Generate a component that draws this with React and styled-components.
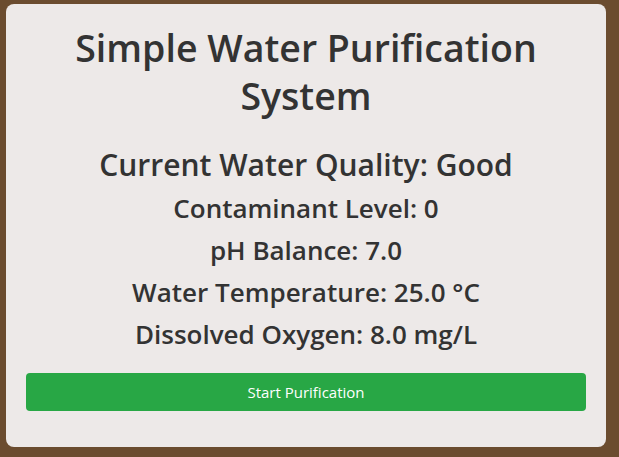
import React from "react";
import styled, { createGlobalStyle } from "styled-components";

const Global = createGlobalStyle`
  html, body { margin: 0; padding: 0; }
  body {
    background: #6b4c2f;
    font-family: "Open Sans", "Noto Sans", sans-serif;
    color: #333;
  }
`;

const Page = styled.div`
  padding: 4px 13px 11px 6px;
`;

const Card = styled.div`
  background: #ede9e8;
  border-radius: 8px;
  padding: 20px 20px 36px;
  width: 600px;
  box-sizing: border-box;
  text-align: center;
`;

const Title = styled.h1`
  font-size: 37.5px;
  font-weight: 600;
  line-height: 48px;
  margin: 0 30px 25px;
`;

const Quality = styled.h2`
  font-size: 30px;
  font-weight: 600;
  line-height: 40px;
  margin: 0 0 2px;
`;

const Stat = styled.p`
  font-size: 26px;
  font-weight: 600;
  line-height: 42px;
  margin: 0;
`;

const Button = styled.button`
  display: block;
  width: 100%;
  height: 38px;
  margin-top: 18px;
  background: #28a745;
  color: #fff;
  border: none;
  border-radius: 4px;
  font-family: inherit;
  font-size: 15px;
  cursor: pointer;
`;

export default function App() {
  return (
    <Page>
      <Global />
      <Card>
        <Title>Simple Water Purification System</Title>
        <Quality>Current Water Quality: Good</Quality>
        <Stat>Contaminant Level: 0</Stat>
        <Stat>pH Balance: 7.0</Stat>
        <Stat>Water Temperature: 25.0 °C</Stat>
        <Stat>Dissolved Oxygen: 8.0 mg/L</Stat>
        <Button>Start Purification</Button>
      </Card>
    </Page>
  );
}
